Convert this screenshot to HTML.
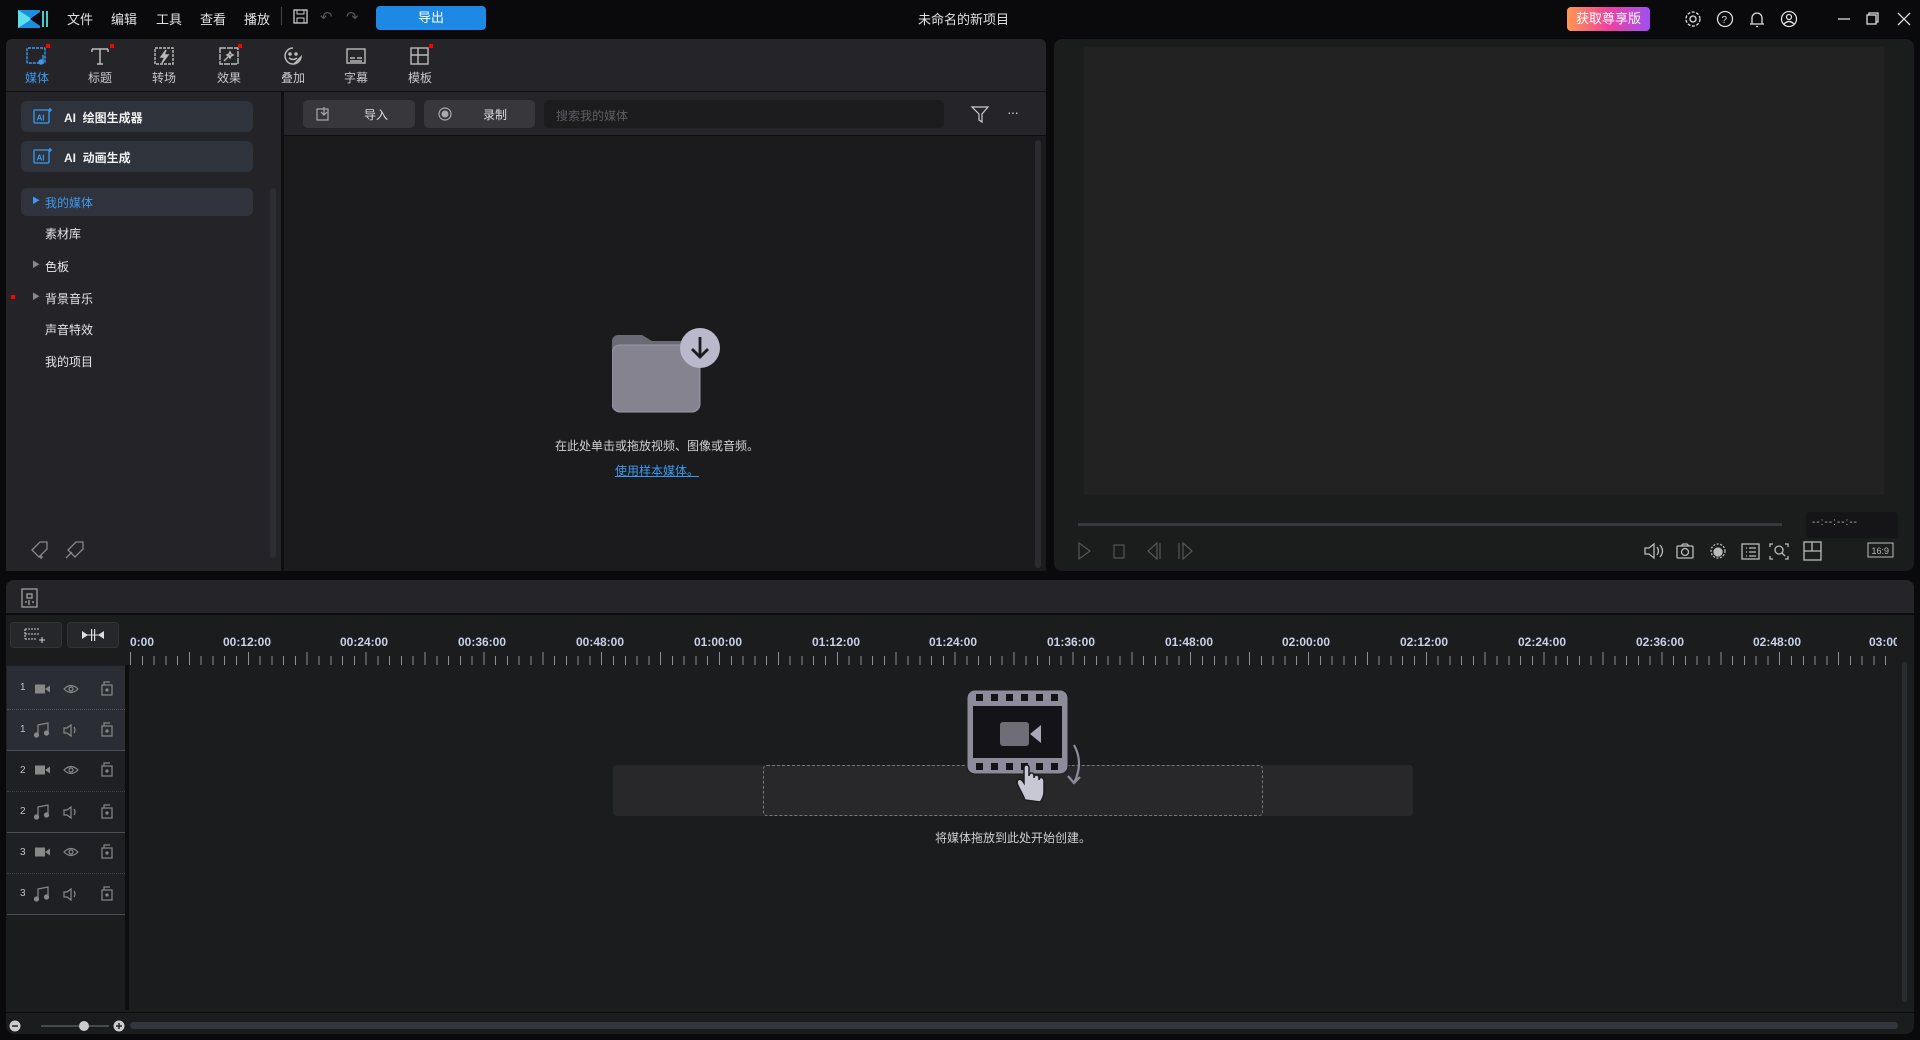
<!DOCTYPE html>
<html><head><meta charset="utf-8"><style>
*{margin:0;padding:0;box-sizing:border-box}
body{width:1920px;height:1040px;background:#0a0a0c;font-family:"Liberation Sans","Noto Sans CJK SC",sans-serif;color:#d8d8dc;font-size:13px;position:relative;overflow:hidden}
.a{position:absolute}
.t{position:absolute;white-space:nowrap}
.menu{top:9px;font-size:13px;color:#e0e0e0}
.tab{position:absolute;top:46px;width:40px;text-align:center;font-size:12px;color:#c8c8cc}
.tab svg{display:block;margin:0 auto 3px}
.dot{position:absolute;width:4px;height:4px;background:#f00}
.side{position:absolute;left:45px;font-size:12px;color:#e4e4e8}
.rl{position:absolute;top:635px;font-size:12px;font-weight:bold;color:#c8d2e6;transform:translateX(-50%)}
.trk{position:absolute;left:7px;width:118px;height:41px}
.trk span{position:absolute;left:13px;top:14px;font-size:10px;color:#c0c0c4}
</style></head><body>
<!-- title bar -->
<svg class="a" style="left:18px;top:9px" width="30" height="20" viewBox="0 0 30 20"><rect x="0" y="1" width="22" height="18" fill="#1a8fe0"/><path d="M0 1 L14 10 L0 19Z" fill="#5ce0f0"/><path d="M22 3 L12 10 L22 17Z" fill="#0a0a0c"/><rect x="24" y="2" width="2" height="16" fill="#4cc"/><rect x="28" y="2" width="2" height="16" fill="#4cc"/></svg>
<div class="t menu" style="left:67px">文件</div>
<div class="t menu" style="left:111px">编辑</div>
<div class="t menu" style="left:156px">工具</div>
<div class="t menu" style="left:200px">查看</div>
<div class="t menu" style="left:244px">播放</div>
<div class="a" style="left:281px;top:7px;width:1px;height:18px;background:#444"></div>
<svg class="a" style="left:293px;top:9px" width="15" height="15"><rect x="1" y="1" width="13" height="13" fill="none" stroke="#ccc" stroke-width="1.3"/><rect x="4" y="1" width="7" height="4" fill="none" stroke="#ccc"/><rect x="4" y="9" width="7" height="5" fill="none" stroke="#ccc"/></svg>
<div class="t" style="left:320px;top:8px;color:#555;font-size:15px">↶</div>
<div class="t" style="left:346px;top:8px;color:#555;font-size:15px">↷</div>
<div class="a" style="left:376px;top:6px;width:110px;height:24px;background:#1e88e5;border-radius:4px;text-align:center;line-height:24px;color:#fff;font-size:13px">导出</div>
<div class="t" style="left:918px;top:9px;font-size:13px;color:#e0e0e0">未命名的新项目</div>
<div class="a" style="left:1567px;top:7px;width:83px;height:24px;border-radius:4px;background:linear-gradient(90deg,#ff9850,#f040a0,#a050f0);text-align:center;line-height:24px;color:#fff;font-size:13px">获取尊享版</div>
<svg class="a" style="left:1685px;top:10px" width="120" height="18" fill="none" stroke="#ddd" stroke-width="1.3">
<circle cx="8" cy="9" r="3"/><circle cx="8" cy="9" r="7" stroke-dasharray="3 1.5"/>
<circle cx="40" cy="9" r="7.5"/><text x="36.5" y="13" font-size="10" fill="#ddd" stroke="none" font-family="Liberation Sans">?</text>
<path d="M67 14 V8 a5 5 0 0 1 10 0 V14 Z M65 14 H79 M71 16.5 h2"/>
<circle cx="104" cy="9" r="7.5"/><circle cx="104" cy="7" r="2.5"/><path d="M99 14 q5 -5 10 0"/>
</svg>
<svg class="a" style="left:1836px;top:10px" width="80" height="18" fill="none" stroke="#ddd" stroke-width="1.3"><path d="M2 9 H14"/><rect x="31" y="5" width="9" height="9"/><path d="M33 5 V3 H42 V12 H40"/><path d="M62 3 L74 15 M74 3 L62 15"/></svg>

<!-- left top panel -->
<div class="a" style="left:6px;top:39px;width:1040px;height:532px;background:#252529;border-radius:6px 6px 0 0"></div>
<div class="a" style="left:6px;top:91px;width:1040px;height:1px;background:#111"></div>
<!-- tabs -->
<div class="tab" style="left:17px;color:#3a9af0"><svg width="22" height="20" fill="none" stroke="#3a9af0" stroke-width="1.4"><rect x="1" y="2" width="18" height="15" rx="1" stroke-dasharray="3 1"/><circle cx="15" cy="16" r="2" fill="#3a9af0"/><path d="M17 16 V9"/></svg>媒体</div>
<div class="dot" style="left:46px;top:44px"></div>
<div class="tab" style="left:80px"><svg width="22" height="20" fill="none" stroke="#bbb" stroke-width="1.5"><path d="M3 3 H19 M11 3 V18 M3 3 V6 M19 3 V6 M8 18 H14"/></svg>标题</div>
<div class="dot" style="left:110px;top:44px"></div>
<div class="tab" style="left:144px"><svg width="22" height="20" fill="none" stroke="#bbb" stroke-width="1.4"><rect x="2" y="2" width="18" height="16" stroke-dasharray="3 1"/><path d="M13 4 L8 11 H12 L9 17 L15 9 H11 Z" fill="#bbb"/></svg>转场</div>
<div class="tab" style="left:209px"><svg width="22" height="20" fill="none" stroke="#bbb" stroke-width="1.4"><rect x="2" y="2" width="18" height="16" stroke-dasharray="6 1"/><path d="M6 15 L12 9 M12 6 l1 2 2 1 -2 1 -1 2 -1 -2 -2 -1 2 -1z"/></svg>效果</div>
<div class="dot" style="left:238px;top:44px"></div>
<div class="tab" style="left:273px"><svg width="22" height="20" fill="none" stroke="#bbb" stroke-width="1.5"><path d="M11 2 a8 8 0 1 0 8 9 L12 18"/><circle cx="8" cy="8" r="1" fill="#bbb"/><circle cx="14" cy="8" r="1" fill="#bbb"/><path d="M7 12 q4 3 8 0"/></svg>叠加</div>
<div class="tab" style="left:336px"><svg width="22" height="20" fill="none" stroke="#bbb" stroke-width="1.4"><rect x="2" y="3" width="18" height="14"/><path d="M5 12 H10 M12 12 H17 M5 15 H17"/></svg>字幕</div>
<div class="tab" style="left:400px"><svg width="22" height="20" fill="none" stroke="#bbb" stroke-width="1.4"><rect x="2" y="2" width="17" height="16"/><path d="M2 9 H19 M9 2 V18"/></svg>模板</div>
<div class="dot" style="left:429px;top:44px"></div>

<!-- sidebar -->
<div class="a" style="left:6px;top:92px;width:275px;height:479px;background:#242428"></div>
<div class="a" style="left:21px;top:101px;width:232px;height:31px;background:#2e333c;border-radius:6px"></div>
<div class="a" style="left:21px;top:141px;width:232px;height:31px;background:#2e333c;border-radius:6px"></div>
<svg class="a" style="left:33px;top:107px" width="20" height="18" fill="none" stroke="#3a9af0" stroke-width="1.3"><rect x="1" y="3" width="15" height="13" rx="1"/><text x="3.5" y="13.5" font-size="8" fill="#3a9af0" stroke="none" font-weight="bold" font-family="Liberation Sans">AI</text><path d="M17 1 v4 M15 3 h4"/></svg>
<svg class="a" style="left:33px;top:147px" width="20" height="18" fill="none" stroke="#3a9af0" stroke-width="1.3"><rect x="1" y="3" width="15" height="13" rx="1"/><text x="3.5" y="13.5" font-size="8" fill="#3a9af0" stroke="none" font-weight="bold" font-family="Liberation Sans">AI</text><path d="M17 1 v4 M15 3 h4"/></svg>
<div class="t" style="left:64px;top:109px;font-size:12px;font-weight:bold;color:#f0f0f0">AI&nbsp; 绘图生成器</div>
<div class="t" style="left:64px;top:149px;font-size:12px;font-weight:bold;color:#f0f0f0">AI&nbsp; 动画生成</div>
<div class="a" style="left:21px;top:188px;width:232px;height:28px;background:#30333b;border-radius:6px"></div>
<div class="t" style="left:32px;top:195px;font-size:8px;color:#3a9af0">▶</div>
<div class="side" style="top:194px;color:#3a9af0">我的媒体</div>
<div class="side" style="top:225px">素材库</div>
<div class="t" style="left:32px;top:259px;font-size:8px;color:#888">▶</div>
<div class="side" style="top:258px">色板</div>
<div class="dot" style="left:11px;top:295px"></div>
<div class="t" style="left:32px;top:291px;font-size:8px;color:#888">▶</div>
<div class="side" style="top:290px">背景音乐</div>
<div class="side" style="top:321px">声音特效</div>
<div class="side" style="top:353px">我的项目</div>
<div class="a" style="left:270px;top:188px;width:6px;height:370px;background:#2c2e35;border-radius:3px"></div>
<svg class="a" style="left:30px;top:540px" width="60" height="20" fill="none" stroke="#888" stroke-width="1.3"><path d="M2 10 L10 2 H17 V9 L9 17 Z M11 15 v4 M9 17 h4"/><path d="M38 10 L46 2 H53 V9 L45 17 Z M36 18 L42 12"/></svg>
<!-- collapse -->
<div class="a" style="left:281px;top:92px;width:3px;height:479px;background:#101012"></div>
<div class="a" style="left:285px;top:332px;width:13px;height:29px;background:#32343a;border-radius:2px;color:#3a9af0;font-size:12px;line-height:29px;text-align:center">‹</div>

<!-- media area -->
<div class="a" style="left:284px;top:136px;width:762px;height:435px;background:#1b1b1d"></div>
<div class="a" style="left:284px;top:135px;width:762px;height:1px;background:#0e0e10"></div>
<div class="a" style="left:303px;top:100px;width:112px;height:28px;background:#37373c;border-radius:5px"></div>
<svg class="a" style="left:316px;top:106px" width="16" height="16" fill="none" stroke="#aaa" stroke-width="1.2"><rect x="1" y="3" width="11" height="11"/><path d="M8 1 V9 M5 6 l3 3 3-3"/></svg>
<div class="t" style="left:364px;top:106px;font-size:12px;color:#ddd">导入</div>
<div class="a" style="left:424px;top:100px;width:111px;height:28px;background:#37373c;border-radius:5px"></div>
<svg class="a" style="left:437px;top:106px" width="16" height="16"><circle cx="8" cy="8" r="6" fill="none" stroke="#aaa" stroke-width="1.2"/><circle cx="8" cy="8" r="3.5" fill="#aaa"/></svg>
<div class="t" style="left:483px;top:106px;font-size:12px;color:#ddd">录制</div>
<div class="a" style="left:544px;top:100px;width:400px;height:28px;background:#1c1c1f;border-radius:5px"></div>
<div class="t" style="left:556px;top:107px;font-size:12px;color:#5c5c62">搜索我的媒体</div>
<svg class="a" style="left:970px;top:104px" width="20" height="20" fill="none" stroke="#ccc" stroke-width="1.2"><path d="M2 3 H18 L12 10 V18 L9 16 V10 Z"/></svg>
<div class="t" style="left:1007px;top:104px;color:#ccc;font-size:14px;letter-spacing:-1px">···</div>
<div class="a" style="left:1035px;top:140px;width:6px;height:428px;background:#2a2c32;border-radius:3px"></div>
<!-- folder -->
<svg class="a" style="left:612px;top:327px" width="110" height="90">
<path d="M0 14 a6 6 0 0 1 6 -6 H30 l10 6 H82 V50 H0Z" fill="#6a6a74"/>
<rect x="0" y="18" width="88" height="67" rx="8" fill="#85838f" stroke="#9a99a4" stroke-width="1"/>
<circle cx="88" cy="21" r="20" fill="#bab9cc"/>
<path d="M88 10 V30 M80 22 L88 30 L96 22" fill="none" stroke="#1b1b1d" stroke-width="2.8"/>
</svg>
<div class="t" style="left:555px;top:437px;font-size:12px;color:#d0d0d4">在此处单击或拖放视频、图像或音频。</div>
<div class="t" style="left:615px;top:462px;font-size:12px;color:#3a9af0;text-decoration:underline">使用样本媒体。</div>

<!-- preview -->
<div class="a" style="left:1054px;top:39px;width:860px;height:532px;background:#1b1c1c;border-radius:8px"></div>
<div class="a" style="left:1084px;top:47px;width:800px;height:448px;background:#212121"></div>
<div class="a" style="left:1078px;top:523px;width:704px;height:3px;background:#38393e"></div>
<div class="a" style="left:1806px;top:512px;width:92px;height:26px;background:#151518;border-radius:3px"></div>
<div class="t" style="left:1812px;top:517px;font-size:10px;color:#bbb;letter-spacing:1px">--:--:--:--</div>
<svg class="a" style="left:1076px;top:540px" width="130" height="22" fill="none" stroke="#555" stroke-width="1.2">
<path d="M3 3 L14 11 L3 19Z"/><rect x="38" y="5" width="10" height="13"/><path d="M81 3 L72 11 L81 19Z M84 3 V19"/><path d="M103 3 V19 M107 3 L116 11 L107 19Z"/></svg>
<svg class="a" style="left:1643px;top:539px" width="270" height="24" fill="none" stroke="#bbb" stroke-width="1.3">
<path d="M2 9 H6 L11 5 V19 L6 15 H2Z M14 8 q3 4 0 8 M17 6 q5 6 0 12"/>
<rect x="34" y="7" width="16" height="12" rx="1"/><circle cx="42" cy="13" r="3.5"/><path d="M38 7 l2 -2 h4 l2 2"/>
<circle cx="75" cy="12" r="7" stroke-dasharray="2 1.5"/><circle cx="75" cy="13" r="4" fill="#bbb"/>
<rect x="99" y="5" width="17" height="15"/><path d="M103 9 h1 M106 9 h7 M103 13 h1 M106 13 h7 M103 17 h1 M106 17 h7"/>
<path d="M130 5 h-3 v3 M142 5 h3 v3 M130 20 h-3 v-3 M142 20 h3 v-3"/><circle cx="136" cy="11" r="4"/><path d="M139 14 l3 3"/>
<rect x="161" y="3" width="17" height="18"/><path d="M161 12 H178 M169 3 V12"/>
<rect x="225" y="4" width="25" height="14" stroke-width="1"/><text x="228.5" y="15" font-size="9" fill="#bbb" stroke="none" font-family="Liberation Sans">16:9</text>
</svg>

<!-- timeline -->
<div class="a" style="left:6px;top:580px;width:1908px;height:454px;background:#1b1c1e;border-radius:8px 8px 8px 8px"></div>
<div class="a" style="left:6px;top:580px;width:1908px;height:33px;background:#252529;border-radius:8px 8px 0 0"></div>
<div class="a" style="left:6px;top:613px;width:1908px;height:2px;background:#0c0c0e"></div>
<svg class="a" style="left:21px;top:588px" width="18" height="20" fill="none" stroke="#aaa" stroke-width="1.2"><rect x="1" y="1" width="15" height="18"/><rect x="6" y="6" width="5" height="4"/><path d="M4 14 h2 M8 12 v5 M11 14 h2"/></svg>
<div class="a" style="left:10px;top:622px;width:52px;height:26px;background:#26272b;border:1px solid #333;border-radius:4px"></div>
<svg class="a" style="left:24px;top:627px" width="24" height="16" fill="none" stroke="#ccc" stroke-width="1.1"><path d="M1 2 H15 M1 2 V12 M1 7 H15 M1 12 H13" stroke-dasharray="2 1"/><path d="M18 10 v6 M15 13 h6"/></svg>
<div class="a" style="left:67px;top:622px;width:52px;height:26px;background:#26272b;border:1px solid #333;border-radius:4px"></div>
<svg class="a" style="left:81px;top:628px" width="24" height="14" fill="#ddd"><path d="M1 3 L7 7 L1 11Z M23 3 L17 7 L23 11Z"/><rect x="10" y="1" width="1.2" height="12"/><rect x="13" y="1" width="1.2" height="12"/><rect x="1" y="6.5" width="22" height="1"/></svg>
<!-- ruler -->
<div class="rl" style="transform:none;left:130px">0:00</div>
<div class="rl" style="left:247px">00:12:00</div>
<div class="rl" style="left:364px">00:24:00</div>
<div class="rl" style="left:482px">00:36:00</div>
<div class="rl" style="left:600px">00:48:00</div>
<div class="rl" style="left:718px">01:00:00</div>
<div class="rl" style="left:836px">01:12:00</div>
<div class="rl" style="left:953px">01:24:00</div>
<div class="rl" style="left:1071px">01:36:00</div>
<div class="rl" style="left:1189px">01:48:00</div>
<div class="rl" style="left:1306px">02:00:00</div>
<div class="rl" style="left:1424px">02:12:00</div>
<div class="rl" style="left:1542px">02:24:00</div>
<div class="rl" style="left:1660px">02:36:00</div>
<div class="rl" style="left:1777px">02:48:00</div>
<div class="t" style="left:1869px;top:635px;font-size:12px;font-weight:bold;color:#c8d2e6;width:28px;overflow:hidden">03:00</div>
<div class="a" style="left:130px;top:652px;width:1766px;height:13px;background:repeating-linear-gradient(90deg,#8a8f9a 0 1px,transparent 1px 11.78px);clip-path:inset(4px 0 0 0)"></div>
<div class="a" style="left:130px;top:652px;width:1766px;height:13px;background:repeating-linear-gradient(90deg,#8a8f9a 0 1px,transparent 1px 58.9px)"></div>
<!-- track headers -->
<div class="a" style="left:6px;top:665px;width:119px;height:248px;background:#1f2024"></div>
<div class="a" style="left:125px;top:665px;width:4px;height:345px;background:#0e0e10"></div>
<div class="trk" style="top:666px;height:44px;background:#2a2d33;border-bottom:1px dotted #555"><span style="top:16px">1</span></div>
<div class="trk" style="top:710px;background:#2a2d33;border-bottom:1px solid #4a4e58"><span>1</span></div>
<div class="trk" style="top:751px;border-bottom:1px dotted #444"><span>2</span></div>
<div class="trk" style="top:792px;border-bottom:1px solid #4a4e58"><span>2</span></div>
<div class="trk" style="top:833px;border-bottom:1px dotted #444"><span>3</span></div>
<div class="trk" style="top:874px;border-bottom:1px solid #4a4e58"><span>3</span></div>
<svg class="a" style="left:30px;top:666px" width="90" height="248" fill="none" stroke="#888" stroke-width="1.2">
<defs>
<g id="v"><rect x="5" y="-4.5" width="10" height="9" fill="#888" stroke="none"/><path d="M15 0 L20 -3.5 V3.5Z" fill="#888" stroke="none"/><path d="M34 0 q7 -7 14 0 q-7 7 -14 0Z"/><circle cx="41" cy="0" r="2"/><rect x="72" y="-4" width="10" height="10"/><path d="M74 -4 V-7 h6"/><circle cx="77" cy="1" r="1" fill="#888"/></g>
<g id="au"><path d="M8 5 V-5 L18 -7 V3"/><circle cx="6.5" cy="5" r="2" fill="#888"/><circle cx="16.5" cy="3" r="2" fill="#888"/><path d="M34 -2 h3 l4 -3 v11 l-4 -3 h-3z M44 -3 q2 3 0 6"/><rect x="72" y="-4" width="10" height="10"/><path d="M74 -4 V-7 h6"/><circle cx="77" cy="1" r="1" fill="#888"/></g>
</defs>
<use href="#v" x="0" y="23"/>
<use href="#au" x="0" y="64"/>
<use href="#v" x="0" y="104"/>
<use href="#au" x="0" y="146"/>
<use href="#v" x="0" y="186"/>
<use href="#au" x="0" y="228"/>
</svg>
<!-- drop area -->
<div class="a" style="left:613px;top:765px;width:800px;height:51px;background:#28282b;border-radius:4px"></div>
<div class="a" style="left:763px;top:765px;width:500px;height:51px;border:1.5px dashed #777;border-radius:4px"></div>
<svg class="a" style="left:965px;top:688px" width="130" height="115">
<rect x="2" y="2" width="101" height="84" rx="8" fill="#8e8c9a" stroke="#1b1c1e" stroke-width="1"/>
<rect x="8" y="18" width="89" height="52" fill="#141418"/>
<g fill="#141418"><rect x="11" y="6" width="7" height="7"/><rect x="26" y="6" width="7" height="7"/><rect x="41" y="6" width="7" height="7"/><rect x="56" y="6" width="7" height="7"/><rect x="71" y="6" width="7" height="7"/><rect x="86" y="6" width="7" height="7"/>
<rect x="11" y="75" width="7" height="7"/><rect x="26" y="75" width="7" height="7"/><rect x="41" y="75" width="7" height="7"/><rect x="56" y="75" width="7" height="7"/><rect x="71" y="75" width="7" height="7"/><rect x="86" y="75" width="7" height="7"/></g>
<rect x="35" y="34" width="29" height="24" rx="3" fill="#6e6d78"/><path d="M65 46 L76 37 V55Z" fill="#a8a6b8"/>
<path d="M60 112 C55 100 50 95 53 92 C55 90 57 92 59 95 V80 C59 76 64 76 64 80 V88 C64 84 69 84 69 88 V90 C69 86 74 86 74 90 V92 C74 88 79 89 79 93 V104 C79 108 77 112 75 114Z" fill="#c8c7d4" stroke="#1b1c1e" stroke-width="1.5"/>
<path d="M109 57 q10 18 0 38 M103 88 l6 7 6 -6" fill="none" stroke="#8e8c9a" stroke-width="2.2"/>
</svg>
<div class="t" style="left:935px;top:829px;font-size:12px;color:#d0d0d4">将媒体拖放到此处开始创建。</div>
<div class="a" style="left:1902px;top:662px;width:5px;height:340px;background:#2a2c32;border-radius:3px"></div>
<!-- bottom bar -->
<div class="a" style="left:6px;top:1012px;width:1908px;height:1px;background:#0c0c0e"></div>
<svg class="a" style="left:8px;top:1017px" width="120" height="18"><circle cx="7" cy="9" r="5.5" fill="#ccc"/><path d="M4 9 h6" stroke="#222" stroke-width="1.5"/><path d="M33 9 H101" stroke="#777"/><circle cx="76" cy="9" r="5" fill="#ccc"/><circle cx="111" cy="9" r="5.5" fill="#ccc"/><path d="M108 9 h6 M111 6 v6" stroke="#222" stroke-width="1.5"/></svg>
<div class="a" style="left:130px;top:1022px;width:1768px;height:7px;background:#34353d;border-radius:4px"></div>
</body></html>
